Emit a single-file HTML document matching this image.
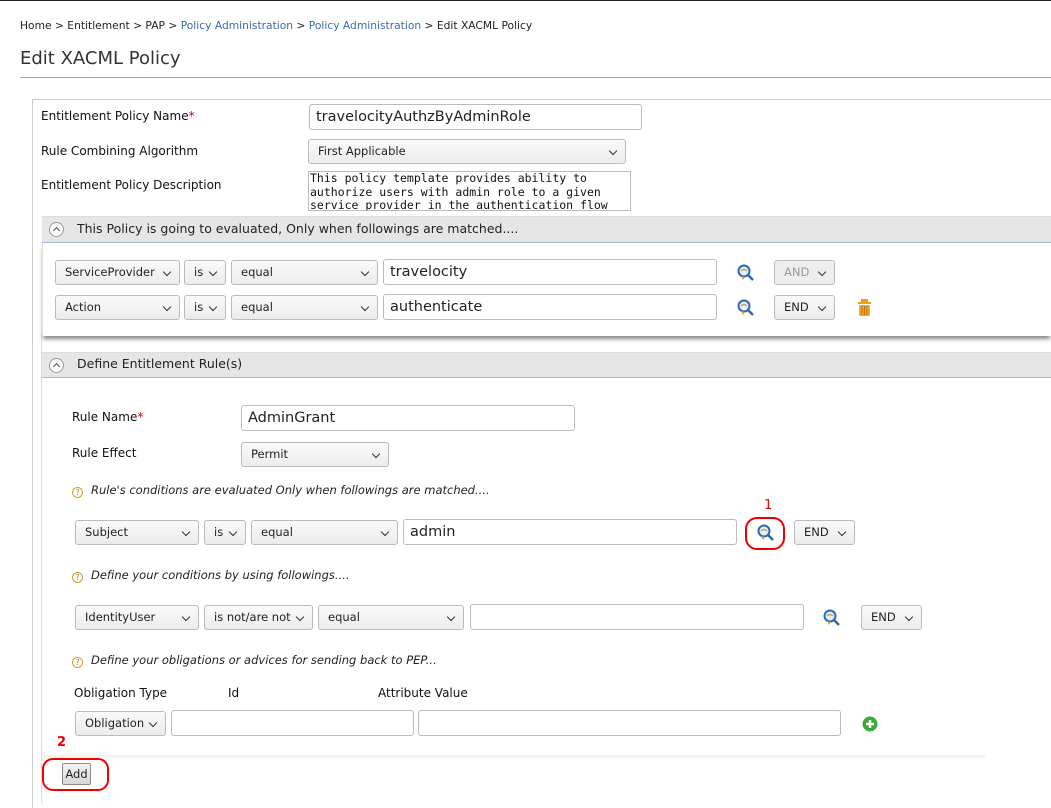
<!DOCTYPE html>
<html><head><meta charset="utf-8"><style>
*{box-sizing:border-box}
body{margin:0;width:1051px;height:803px;overflow:hidden;background:#fff;font-family:"DejaVu Sans","Liberation Sans",sans-serif;color:#222;position:relative;border-top:1px solid #222}
.a{position:absolute;white-space:nowrap}
.lbl{font-size:12px;color:#111}
.sel{position:absolute;height:25px;border:1px solid #bbb;border-radius:3px;background:linear-gradient(#fafafa,#ececec);font-size:11.5px;line-height:23px;padding-left:9px;color:#222}
.sel:after{content:"";position:absolute;right:9px;top:8px;width:5px;height:5px;border-right:1.5px solid #333;border-bottom:1.5px solid #333;transform:rotate(45deg)}
.inp{position:absolute;height:26px;border:1px solid #bbb;border-radius:3px;background:#fff;font-size:14.5px;line-height:25px;padding-left:6px;color:#222}
.hdr{position:absolute;left:42px;right:0;background:#e6e6e6;border-bottom:1px solid #a8b8d8;border-top:1px solid #ddd;font-size:12.5px}
.circ{position:absolute;left:7px;width:15px;height:15px;border:1px solid #999;border-radius:50%;background:#fff}
.circ:after{content:"";position:absolute;left:4px;top:5px;width:4px;height:4px;border-left:1.3px solid #444;border-top:1.3px solid #444;transform:rotate(45deg)}
.help{font-size:11.5px;font-style:italic;color:#222}
.q{display:inline-block;width:11px;height:11px;border:1px solid #d49a2a;border-radius:50%;font-size:8px;line-height:9px;text-align:center;color:#c08010;font-style:normal;margin-right:8px;vertical-align:-1px}
</style></head><body>
<div class="a" style="left:20px;top:18px;font-size:10.7px;color:#222">Home &gt; Entitlement &gt; PAP &gt; <span style="color:#3a6bb0">Policy Administration</span> &gt; <span style="color:#3a6bb0">Policy Administration</span> &gt; Edit XACML Policy</div>
<div class="a" style="left:20px;top:47px;font-size:18px;color:#333">Edit XACML Policy</div>
<div class="a" style="left:20px;right:0;top:76px;height:1px;background:#9aa"></div>
<div class="a" style="left:32px;right:0;top:98px;bottom:-5px;border-left:1px solid #ccc;border-top:1px solid #ccc"></div>
<div class="a" style="left:41px;top:333px;bottom:0;width:1px;background:#ddd"></div>
<div class="a lbl" style="left:41px;top:108px">Entitlement Policy Name<span style="color:#c00">*</span></div>
<div class="a lbl" style="left:41px;top:143px">Rule Combining Algorithm</div>
<div class="a lbl" style="left:41px;top:177px">Entitlement Policy Description</div>
<div class="inp" style="left:309px;top:103px;width:333px">travelocityAuthzByAdminRole</div>
<div class="sel" style="left:308px;top:138px;width:318px">First Applicable</div>
<div class="a" style="left:308px;top:170px;width:323px;height:40px;border:1px solid #bbb;font-family:'DejaVu Sans Mono','Liberation Mono',monospace;font-size:11.5px;line-height:13.5px;padding-left:1px;overflow:hidden;color:#111">This policy template provides ability to<br>authorize users with admin role to a given<br>service provider in the authentication flow</div>
<div class="hdr" style="top:215px;height:27px"><div class="circ" style="top:5px"></div><div class="a" style="left:35px;top:4px">This Policy is going to evaluated, Only when followings are matched....</div></div>
<div class="a" style="left:42px;right:0;top:242px;height:93px;background:#fff;box-shadow:0 4px 4px -1px #888;border-left:1px solid #ddd"></div>
<div class="sel" style="left:55px;top:259px;width:125px">ServiceProvider</div>
<div class="sel" style="left:184px;top:259px;width:42px">is</div>
<div class="sel" style="left:231px;top:259px;width:147px">equal</div>
<div class="inp" style="left:383px;top:258px;width:334px">travelocity</div>
<div class="sel" style="left:774px;top:259px;width:61px;color:#999;background:#eee">AND</div>
<div class="sel" style="left:55px;top:294px;width:125px">Action</div>
<div class="sel" style="left:184px;top:294px;width:42px">is</div>
<div class="sel" style="left:231px;top:294px;width:147px">equal</div>
<div class="inp" style="left:383px;top:293px;width:334px">authenticate</div>
<div class="sel" style="left:774px;top:294px;width:61px">END</div>
<svg class="a" style="left:857px;top:298px" width="15" height="18"><rect x="4" y="0" width="7" height="3" fill="#e8a020"/><rect x="1" y="3" width="13" height="2" fill="#e8a020"/><rect x="2" y="6" width="11" height="11" rx="1" fill="#f0a830"/><path d="M5 7v9M7.5 7v9M10 7v9" stroke="#c07010"/></svg>
<div class="hdr" style="top:351px;height:26px"><div class="circ" style="top:5px"></div><div class="a" style="left:35px;top:3px">Define Entitlement Rule(s)</div></div>
<div class="a lbl" style="left:72px;top:409px">Rule Name<span style="color:#c00">*</span></div>
<div class="inp" style="left:241px;top:404px;width:334px">AdminGrant</div>
<div class="a lbl" style="left:72px;top:445px">Rule Effect</div>
<div class="sel" style="left:241px;top:441px;width:148px">Permit</div>
<div class="a help" style="left:72px;top:482px"><span class="q">?</span>Rule's conditions are evaluated Only when followings are matched....</div>
<div class="sel" style="left:75px;top:519px;width:124px">Subject</div>
<div class="sel" style="left:204px;top:519px;width:42px">is</div>
<div class="sel" style="left:251px;top:519px;width:147px">equal</div>
<div class="inp" style="left:403px;top:518px;width:334px">admin</div>
<div class="a" style="left:745px;top:516px;width:40px;height:33px;border:2.5px solid #e00;border-radius:12px"></div>
<div class="a" style="left:764px;top:497px;color:#e00;font-size:13px">1</div>
<div class="sel" style="left:794px;top:519px;width:61px">END</div>
<div class="a help" style="left:72px;top:567px"><span class="q">?</span>Define your conditions by using followings....</div>
<div class="sel" style="left:75px;top:604px;width:124px">IdentityUser</div>
<div class="sel" style="left:204px;top:604px;width:109px">is not/are not</div>
<div class="sel" style="left:318px;top:604px;width:146px">equal</div>
<div class="inp" style="left:470px;top:603px;width:334px"></div>
<div class="sel" style="left:861px;top:604px;width:61px">END</div>
<div class="a help" style="left:72px;top:652px"><span class="q">?</span>Define your obligations or advices for sending back to PEP...</div>
<div class="a lbl" style="left:74px;top:685px">Obligation Type</div>
<div class="a lbl" style="left:228px;top:685px">Id</div>
<div class="a lbl" style="left:378px;top:685px">Attribute Value</div>
<div class="sel" style="left:75px;top:710px;width:91px">Obligation</div>
<div class="inp" style="left:171px;top:709px;width:243px"></div>
<div class="inp" style="left:418px;top:709px;width:423px"></div>
<svg class="a" style="left:862px;top:715px" width="16" height="16"><circle cx="8" cy="8" r="7.5" fill="#3aaa3a"/><path d="M8 4v8M4 8h8" stroke="#fff" stroke-width="2.5"/></svg>
<div class="a" style="left:42px;top:754px;width:943px;height:4px;background:linear-gradient(#eee,#fff)"></div>
<div class="a" style="left:57px;top:734px;color:#e00;font-size:13px;font-weight:bold">2</div>
<div class="a" style="left:42px;top:757px;width:67px;height:33px;border:2.5px solid #e00;border-radius:11px"></div>
<div class="a" style="left:62px;top:762px;width:29px;height:22px;border:1px solid #888;border-radius:2px;background:linear-gradient(#f4f4f4,#d8d8d8);font-size:11.5px;line-height:20px;text-align:center">Add</div>
<svg width="0" height="0" style="position:absolute"><defs><g id="mg"><circle cx="7" cy="7" r="5.5" fill="#e8f0f8" stroke="#2a6ab0" stroke-width="2"/><path d="M4 7q3-3 6 0" stroke="#c9a060" fill="none" stroke-width="1.5"/><path d="M11 11l5 5" stroke="#2a6ab0" stroke-width="2.5"/><path d="M4 12l2 4 2-3z" fill="#d0a040"/></g></defs></svg>
<svg class="a" style="left:737px;top:263px" width="18" height="18"><use href="#mg"/></svg>
<svg class="a" style="left:737px;top:298px" width="18" height="18"><use href="#mg"/></svg>
<svg class="a" style="left:757px;top:523px" width="18" height="18"><use href="#mg"/></svg>
<svg class="a" style="left:823px;top:608px" width="18" height="18"><use href="#mg"/></svg>
</body></html>
